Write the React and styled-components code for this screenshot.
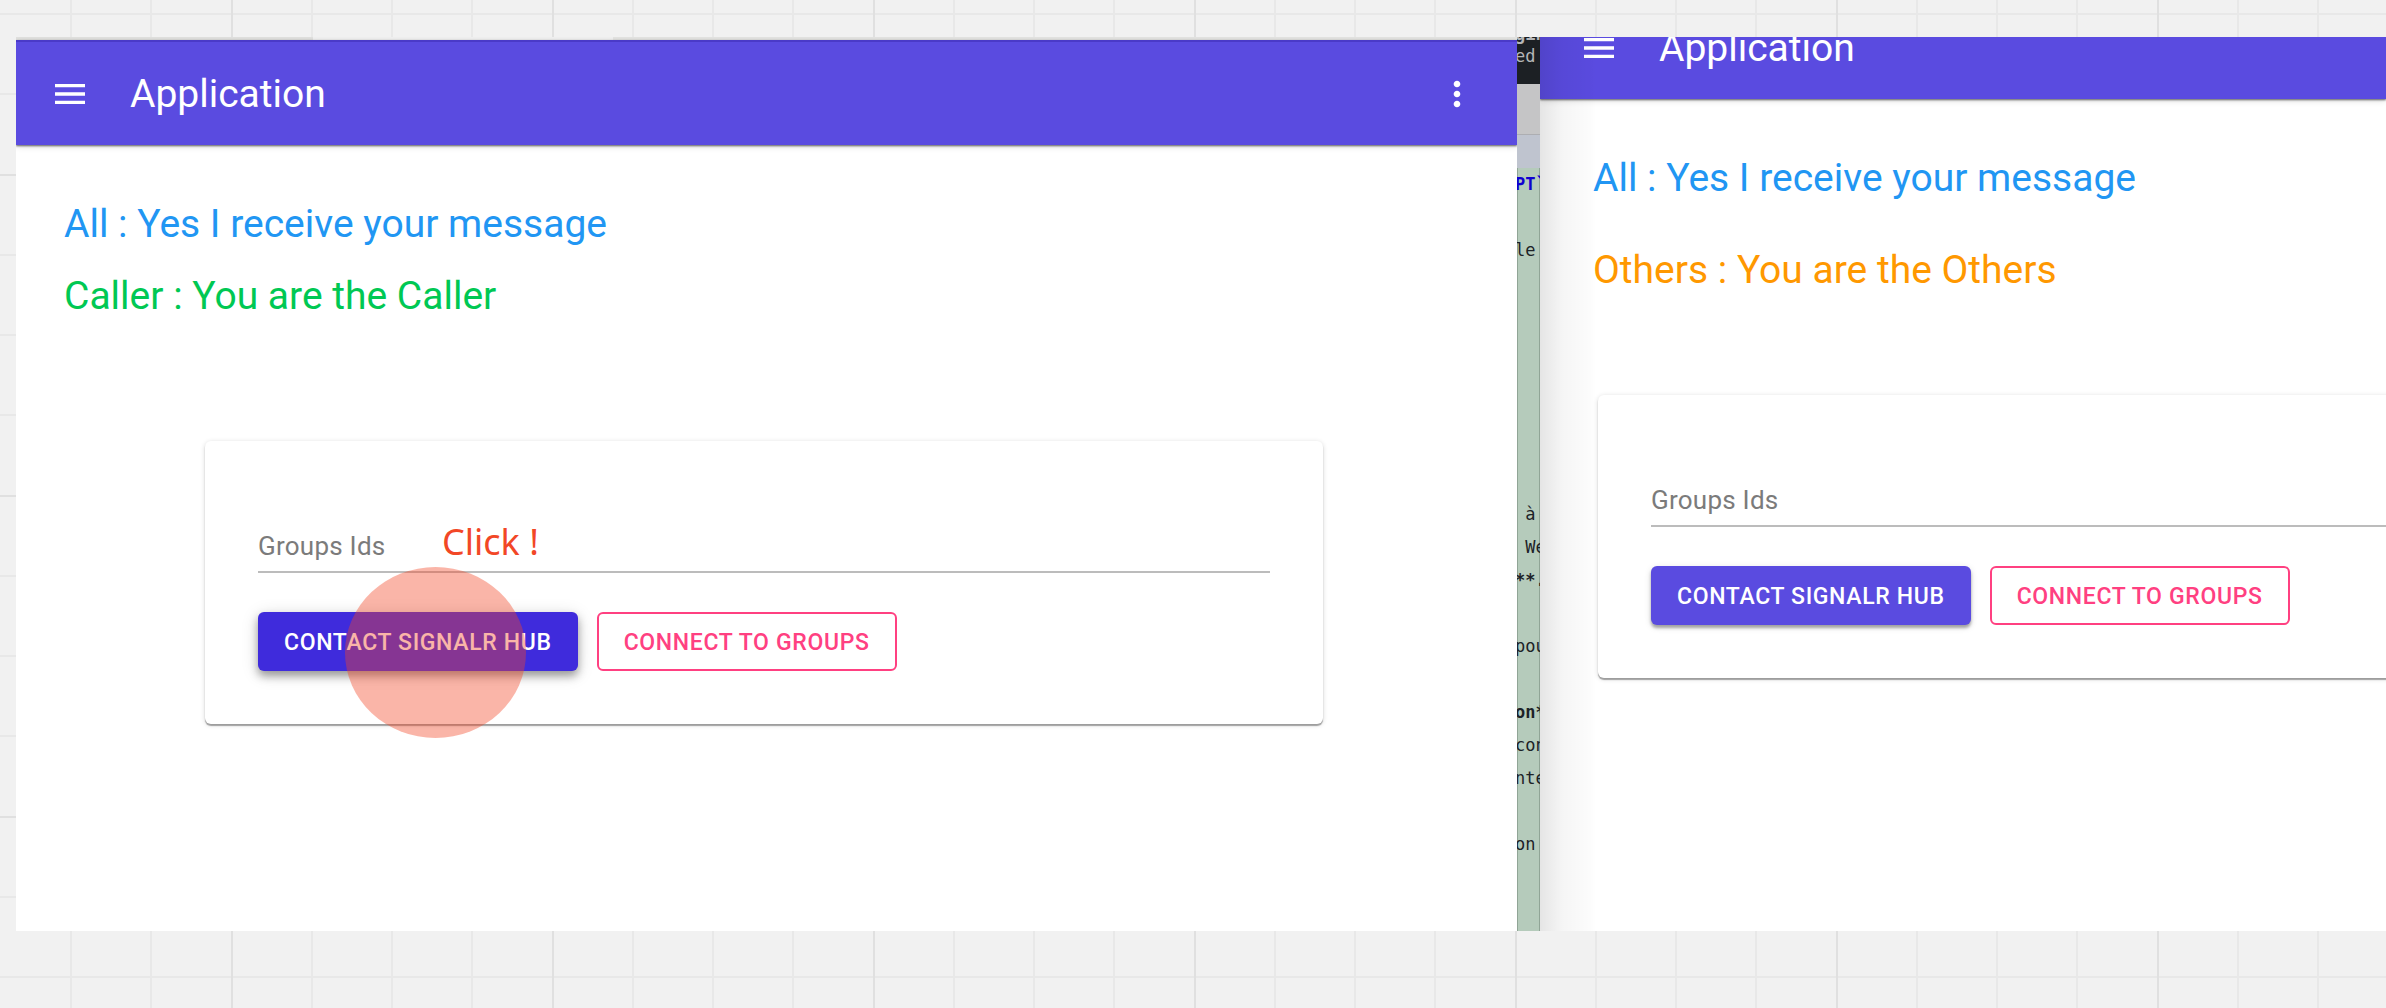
import React from "react";
import styled, { createGlobalStyle, css } from "styled-components";

const GlobalStyle = createGlobalStyle`
  *, *::before, *::after { box-sizing: border-box; }
  body {
    margin: 0;
    font-family: Roboto, "Liberation Sans", sans-serif;
  }
`;

const Board = styled.main`
  display: flex;
  min-height: 100vh;
  padding: 37px 0 77px 16px;
  overflow: hidden;
  background-color: #f1f1f1;
  background-image:
    linear-gradient(90deg, #e0e0e0 2px, transparent 2px),
    linear-gradient(#e0e0e0 2px, transparent 2px),
    linear-gradient(90deg, transparent 80px, #e8e8e8 80px, #e8e8e8 82px, transparent 82px, transparent 160px, #e8e8e8 160px, #e8e8e8 162px, transparent 162px, transparent 240px, #e8e8e8 240px, #e8e8e8 242px, transparent 242px),
    linear-gradient(transparent 80px, #e8e8e8 80px, #e8e8e8 82px, transparent 82px, transparent 160px, #e8e8e8 160px, #e8e8e8 162px, transparent 162px, transparent 240px, #e8e8e8 240px, #e8e8e8 242px, transparent 242px);
  background-size: 321px 321px;
  background-position: 231px 174px;
`;

const Window = styled.section`
  position: relative;
  display: flex;
  flex-direction: column;
  flex: ${(p) => p.$grow} 1 0;
  min-width: 0;
  overflow: hidden;
  background: #fff;
`;

const Backdrop = styled.div`
  flex-shrink: 0;
  height: 3px;
  background: linear-gradient(90deg, #e0e0de 297px, #f0f0f0 297px, #f0f0f0 597px, #e3e3e1 597px);
`;

const EdgeShade = styled.div`
  position: absolute;
  inset: 0 auto 0 0;
  width: 56px;
  background: linear-gradient(90deg, rgba(0, 0, 0, 0.1), rgba(0, 0, 0, 0.04) 40%, rgba(0, 0, 0, 0.01) 90%, transparent);
  pointer-events: none;
`;

const AppBar = styled.header`
  display: flex;
  flex-shrink: 0;
  align-items: center;
  gap: 40px;
  height: 105px;
  margin-top: ${(p) => (p.$scrolled ? "-43px" : "0")};
  padding: 0 40px 0 ${(p) => p.$inset}px;
  color: #fff;
  background: #5a4be0;
  border-top: 2px solid #4a3ac8;
  box-shadow: 0 1px 2px rgba(0, 0, 0, 0.6), 0 2px 6px rgba(0, 0, 0, 0.12);
`;

const IconButton = styled.button`
  display: flex;
  padding: 0;
  border: 0;
  color: inherit;
  background: none;
  cursor: pointer;

  svg {
    width: 40px;
    height: 40px;
    fill: currentColor;
  }
`;

const Title = styled.h1`
  flex: 1;
  margin: 0;
  font-size: 39px;
  font-weight: 400;
  line-height: 52px;
`;

const Messages = styled.div`
  display: flex;
  flex-direction: column;
  gap: ${(p) => p.$gap}px;
  min-height: 296px;
  padding: 53px 48px 0 ${(p) => p.$inset}px;
`;

const tones = { all: "#2196f3", caller: "#00c853", others: "#ff9800" };

const Message = styled.p`
  margin: 0;
  font-size: 39px;
  line-height: 52px;
  color: ${(p) => tones[p.$tone]};
`;

const Card = styled.form`
  margin: ${(p) => (p.$cut ? "0 -330px 0 58px" : "0 194px 0 189px")};
  padding: 79px 53px 53px;
  background: #fff;
  border-radius: 6px;
  box-shadow: 0 2px 1px rgba(0, 0, 0, 0.32), 0 1px 5px rgba(0, 0, 0, 0.16);
`;

const Field = styled.input`
  display: block;
  width: 100%;
  height: 53px;
  padding: 0;
  border: 0;
  border-bottom: 2px solid #bcbcbc;
  outline: none;
  font: 400 26px Roboto, "Liberation Sans", sans-serif;
  letter-spacing: 0.00938em;
  color: #212121;
  background: none;

  &::placeholder {
    color: #7b7b7b;
    opacity: 1;
  }
`;

const Actions = styled.div`
  display: flex;
  gap: 19px;
  margin-top: 39px;
`;

const Button = styled.button`
  height: 59px;
  padding: 2px 25px 0;
  border: 2px solid #ff4081;
  border-radius: 6px;
  font: 500 23px Roboto, "Liberation Sans", sans-serif;
  letter-spacing: 0.02857em;
  text-transform: uppercase;
  color: #ff4081;
  background: transparent;
  cursor: pointer;

  ${(p) =>
    p.$filled &&
    css`
      padding: 2px 26px 0;
      border: 0;
      color: #fff;
      background: #5a4be0;
      box-shadow: 0 3px 3px rgba(0, 0, 0, 0.3), 0 2px 7px rgba(0, 0, 0, 0.14);
    `}

  ${(p) =>
    p.$pressed &&
    css`
      background: #3f2bdc;
      box-shadow: 0 5px 8px rgba(0, 0, 0, 0.34), 0 3px 18px rgba(0, 0, 0, 0.14);
    `}
`;

const ClickNote = styled.span`
  position: absolute;
  top: 481px;
  left: 426px;
  font-family: "Noto Sans", "Open Sans", sans-serif;
  font-size: 36px;
  line-height: 48px;
  color: #f24726;
`;

const ClickSpot = styled.span`
  position: absolute;
  top: 530px;
  left: 329px;
  width: 181px;
  height: 171px;
  border-radius: 50%;
  background: rgba(242, 71, 38, 0.4);
  pointer-events: none;
`;

const EditorSliver = styled.aside`
  display: flex;
  flex-direction: column;
  flex: 0 0 23px;
  overflow: hidden;
  font: 17px "DejaVu Sans Mono", "Liberation Mono", monospace;
  background: #b5cbbb;
`;

const Lines = styled.pre`
  margin: 0 0 0 -2px;
  font: inherit;
  line-height: ${(p) => p.$pitch}px;
`;

const Terminal = styled.div`
  display: flex;
  flex-direction: column;
  justify-content: flex-end;
  height: 47px;
  padding-bottom: 17px;
  overflow: hidden;
  color: #b4b6b8;
  background: #1c2024;
`;

const TabStrip = styled.div`
  height: 51px;
  border-bottom: 1px solid #adaeb2;
  background: #c5c5c6;
`;

const Ruler = styled.div`
  height: 33px;
  background: #bfc4cf;
`;

const Source = styled.div`
  flex: 1;
  overflow: hidden;
  color: #1c2227;
  box-shadow: inset 1px 0 #90a596, inset -1px 0 #90a596;
`;

const Keyword = styled.b`
  color: #1000d0;
`;

const MenuIcon = () => (
  <svg viewBox="0 0 24 24" aria-hidden="true">
    <path d="M3 18h18v-2H3v2zm0-5h18v-2H3v2zm0-7v2h18V6H3z" />
  </svg>
);

const MoreIcon = () => (
  <svg viewBox="0 0 24 24" aria-hidden="true">
    <path d="M12 8c1.100 0 2-.9 2-2s-.9-2-2-2-2 .9-2 2 .9 2 2 2zm0 2c-1.100 0-2 .9-2 2s.9 2 2 2 2-.9 2-2-.9-2-2-2zm0 6c-1.100 0-2 .9-2 2s.9 2 2 2 2-.9 2-2-.9-2-2-2z" />
  </svg>
);

function GroupsForm({ cut, pressed }) {
  return (
    <Card $cut={cut} onSubmit={(e) => e.preventDefault()}>
      <Field type="text" aria-label="Groups Ids" placeholder="Groups Ids" />
      <Actions>
        <Button type="button" $filled $pressed={pressed}>
          Contact SignalR Hub
        </Button>
        <Button type="submit">Connect to groups</Button>
      </Actions>
    </Card>
  );
}

export default function App() {
  return (
    <>
      <GlobalStyle />
      <Board>
        <Window $grow={1501}>
          <Backdrop />
          <AppBar $inset={34}>
            <IconButton aria-label="Menu">
              <MenuIcon />
            </IconButton>
            <Title>Application</Title>
            <IconButton aria-label="More">
              <MoreIcon />
            </IconButton>
          </AppBar>
          <Messages $gap={20} $inset={48}>
            <Message $tone="all">All : Yes I receive your message</Message>
            <Message $tone="caller">Caller : You are the Caller</Message>
          </Messages>
          <GroupsForm pressed />
          <ClickNote>Click !</ClickNote>
          <ClickSpot />
        </Window>

        <EditorSliver>
          <Terminal>
            <Lines $pitch={22}>
              <b>gin</b>
              {"\ned"}
            </Lines>
          </Terminal>
          <TabStrip />
          <Ruler />
          <Source>
            <Lines $pitch={33}>
              <Keyword>PT`</Keyword>
              {"\n\nle\n\n\n\n\n\n\n\n à\n We\n"}
              <b>**.</b>
              {"\n\npou\n\n"}
              <b>on*</b>
              {"\ncon\nnte\n\non"}
            </Lines>
          </Source>
        </EditorSliver>

        <Window $grow={846}>
          <AppBar $scrolled $inset={39}>
            <IconButton aria-label="Menu">
              <MenuIcon />
            </IconButton>
            <Title>Application</Title>
          </AppBar>
          <Messages $gap={40} $inset={53}>
            <Message $tone="all">All : Yes I receive your message</Message>
            <Message $tone="others">Others : You are the Others</Message>
          </Messages>
          <EdgeShade />
          <GroupsForm cut />
        </Window>
      </Board>
    </>
  );
}
